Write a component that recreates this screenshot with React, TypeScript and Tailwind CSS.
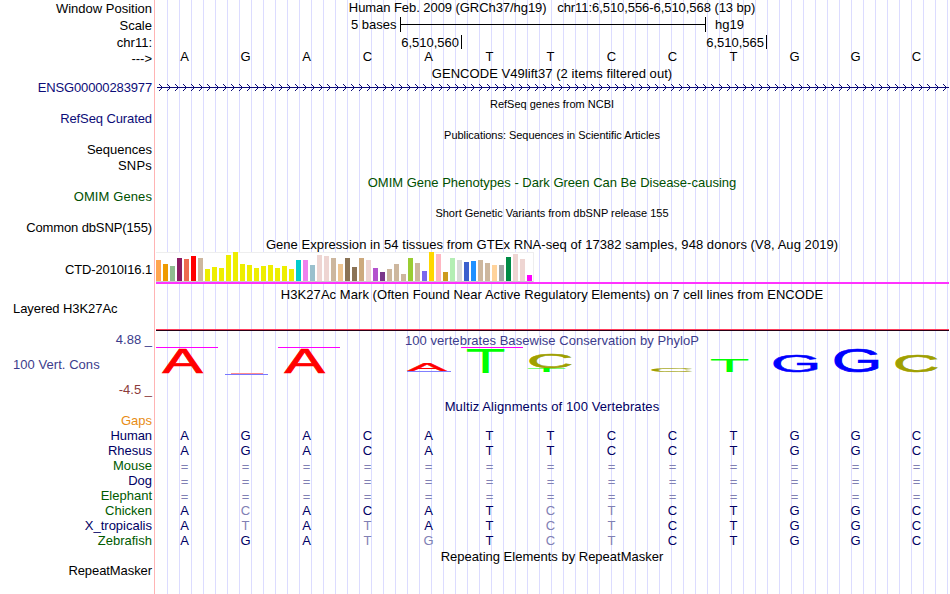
import clsx from "clsx";

type Label = { text: string; height: string; className?: string };

const labels: Label[] = [
  { text: "Window Position", height: "h-[17px]" },
  { text: "Scale", height: "h-[17px]" },
  { text: "chr11:", height: "h-[17px]" },
  { text: "--->", height: "h-[16px]" },
  { text: "ENSG00000283977", height: "h-[29px]", className: "tracking-[-0.14px] text-[#0c0c78]" },
  { text: "RefSeq Curated", height: "h-[31px]", className: "tracking-[-0.1px] text-[#0c0c78]" },
  { text: "Sequences", height: "h-[31px]" },
  { text: "SNPs", height: "h-[16px]", className: "tracking-[0.2px]" },
  { text: "OMIM Genes", height: "h-[31px]", className: "tracking-[0.1px] text-[#005000]" },
  { text: "Common dbSNP(155)", height: "h-[31px]", className: "tracking-[-0.12px]" },
  { text: "CTD-2010I16.1", height: "h-[42px]", className: "tracking-[-0.15px]" },
  { text: "Layered H3K27Ac", height: "h-[39px]", className: "mr-auto pl-[13px] tracking-[-0.07px]" },
  { text: "4.88 _", height: "h-[31px]", className: "text-[#3c3c8c]" },
  { text: "100 Vert. Cons", height: "h-[25px]", className: "mr-auto pl-[13px] tracking-[0.05px] text-[#3c3c8c]" },
  { text: "-4.5 _", height: "h-[25px]", className: "text-[#8c3c3c]" },
  { text: "Gaps", height: "h-[31px]", className: "text-[#e88c14]" },
  { text: "Human", height: "h-[15px]", className: "tracking-[-0.1px] text-[#000064]" },
  { text: "Rhesus", height: "h-[15px]", className: "text-[#000064]" },
  { text: "Mouse", height: "h-[15px]", className: "text-[#005a00]" },
  { text: "Dog", height: "h-[15px]", className: "text-[#000064]" },
  { text: "Elephant", height: "h-[15px]", className: "text-[#005a00]" },
  { text: "Chicken", height: "h-[15px]", className: "text-[#005a00]" },
  { text: "X_tropicalis", height: "h-[15px]", className: "text-[#000064]" },
  { text: "Zebrafish", height: "h-[15px]", className: "text-[#005a00]" },
  { text: "RepeatMasker", height: "h-[30px]", className: "tracking-[-0.08px]" },
];

// [height, colour] per tissue
const tissues: [number, string][] = [
  [21, "#ffa54f"], [17, "#ee9a00"], [15, "#8fbc8f"], [23, "#8b1c62"], [22, "#ee6a50"], [25, "#ff0000"],
  [23, "#cdb79e"], [12, "#eeee00"], [14, "#eeee00"], [13, "#eeee00"], [26, "#eeee00"], [29, "#eeee00"],
  [17, "#eeee00"], [16, "#eeee00"], [13, "#eeee00"], [15, "#eeee00"], [16, "#eeee00"], [13, "#eeee00"],
  [15, "#eeee00"], [12, "#eeee00"], [21, "#00cdcd"], [21, "#ee82ee"], [16, "#9ac0cd"], [26, "#eed5d2"],
  [25, "#eed5d2"], [23, "#cdb79e"], [17, "#eec591"], [23, "#8b7355"], [14, "#8b7355"], [23, "#cdaa7d"],
  [21, "#eed5d2"], [13, "#b452cd"], [9, "#7a378b"], [12, "#cdb79e"], [17, "#cdb79e"], [7, "#cdb79e"],
  [23, "#9acd32"], [18, "#cdb79e"], [10, "#7a67ee"], [29, "#ffd700"], [27, "#ffb6c1"], [9, "#cd9b1d"],
  [23, "#b4eeb4"], [21, "#d9d9d9"], [19, "#3a5fcd"], [20, "#1e90ff"], [21, "#cdb79e"], [18, "#cdb79e"],
  [16, "#ffd39b"], [16, "#a6a6a6"], [24, "#008b45"], [27, "#eed5d2"], [22, "#eed5d2"], [6, "#ff00ff"],
];

const reference = "AGACATTCCTGGC";

const alignments = [
  reference,
  reference,
  "=============",
  "=============",
  "=============",
  "ACACATCTCTGGC",
  "ATATATCTCTGGC",
  "AGATGTCTCTGGC",
];

// glyph extents in em, used to stretch a letter to a given box
const extents: Record<string, [number, number, number, number]> = {
  A: [0.002, 0.665, 0, 0.688],
  T: [0.021, 0.59, 0, 0.688],
  G: [0.05, 0.709, -0.01, 0.698],
  C: [0.05, 0.684, -0.01, 0.698],
};

type LogoProps = { char: string; x: number; y: number; w: number; h: number; fill: string };

const LogoLetter = ({ char, x, y, w, h, fill }: LogoProps) => {
  const [x0, x1, y0, y1] = extents[char];
  const sx = w / ((x1 - x0) * 50);
  const sy = h / ((y1 - y0) * 50);
  return (
    <text
      fontSize={50}
      fill={fill}
      stroke={fill}
      strokeWidth={char === "T" ? 0 : 1}
      transform={`translate(${x - x0 * 50 * sx} ${y + h + y0 * 50 * sy}) scale(${sx} ${sy})`}
    >
      {char}
    </text>
  );
};

const logo: LogoProps[] = [
  { char: "A", x: 7.5, y: 2, w: 40, h: 24, fill: "#ff0000" },
  { char: "A", x: 129.5, y: 2, w: 40, h: 24, fill: "#ff0000" },
  { char: "A", x: 252.5, y: 16, w: 39, h: 8, fill: "#ff0000" },
  { char: "T", x: 312, y: 2, w: 37.5, h: 24, fill: "#00ff00" },
  { char: "T", x: 373, y: 21, w: 37.5, h: 4, fill: "#00ff00" },
  { char: "C", x: 375, y: 7, w: 41, h: 14, fill: "#a0a000" },
  { char: "C", x: 497, y: 21, w: 40, h: 4, fill: "#a0a000" },
  { char: "T", x: 556, y: 13, w: 37.5, h: 12, fill: "#00ff00" },
  { char: "G", x: 619, y: 8, w: 43, h: 17, fill: "#0000ff" },
  { char: "G", x: 680, y: 2, w: 43, h: 23, fill: "#0000ff" },
  { char: "C", x: 741, y: 8, w: 41, h: 17, fill: "#a0a000" },
];

const Title = ({ children, className }: { children: string; className?: string }) => (
  <div className={clsx("flex items-end justify-center whitespace-pre", className)}>{children}</div>
);

const Bases = ({ seq, className }: { seq: string; className?: string }) => (
  <div className={clsx("-ml-px grid w-[793px] grid-cols-13 items-end text-center", className)}>
    {seq.split("").map((base, i) => (
      <span
        key={i}
        className={clsx(
          base === "=" && "translate-y-px",
          base !== reference[i] && "text-[#8080b4]",
        )}
      >
        {base}
      </span>
    ))}
  </div>
);

const GeneTrack = () => (
  <svg width="794" height="7" className="mt-[2px] block" shapeRendering="crispEdges">
    <path d="M2 3.5H794" stroke="#0c0c78" />
    {Array.from({ length: 99 }, (_, i) => (
      <path
        key={i}
        d={`M${4 + i * 8} 0h1v1h1v1h1v1h1v1h-1v1h-1v1h-1v1h-1v-1h1v-1h1v-1h1v-1h-1v-1h-1v-1h-1z`}
        fill="#0c0c78"
      />
    ))}
  </svg>
);

const Expression = () => (
  <div className="mt-[-1px] ml-px h-[32px] border-b-2 border-[#ff33ff]">
    <div className="flex h-[30px] w-[378px] items-end gap-[2px] border-t border-r border-b border-[#eeeeee] border-b-[#cccccc] bg-white">
      {tissues.map(([height, color], i) => (
        <div key={i} className="w-[5px] shrink-0" style={{ height, backgroundColor: color }} />
      ))}
    </div>
  </div>
);

const Conservation = () => (
  <svg width="794" height="30" className="block overflow-visible" fontFamily="Liberation Sans, sans-serif">
    <path d="M1 .5H63M123 .5H185M306 .5H368" stroke="#ff00ff" />
    <path d="M76 26.5H108" stroke="#ff8c8c" />
    <path d="M70 27.5H113" stroke="#7878ff" />
    <path d="M252 24.5H296" stroke="#8080ff" />
    {logo.map((letter, i) => (
      <LogoLetter key={i} {...letter} />
    ))}
  </svg>
);

const App = () => {
  return (
    <div className="flex h-[594px] w-[950px] overflow-hidden bg-white font-['Liberation_Sans',sans-serif] text-[13px] leading-4 text-black">
      <div className="flex w-[154px] flex-col items-end">
        {labels.map(({ text, height, className }) => (
          <div
            key={text}
            className={clsx("flex shrink-0 items-end pr-[2px] whitespace-pre", height, className)}
          >
            {text}
          </div>
        ))}
      </div>
      <div className="w-px bg-[#ffb4b4]" />
      <div className="w-[794px] bg-[repeating-linear-gradient(to_right,#dcdcff_0,#dcdcff_1px,transparent_1px,transparent_12px)] bg-[position:12px_0] bg-no-repeat">
        <Title className="h-[16px] tracking-[-0.06px]">
          {"Human Feb. 2009 (GRCh37/hg19)   chr11:6,510,556-6,510,568 (13 bp)"}
        </Title>
        <div className="mt-px flex h-[15px] items-center pl-[196px]">
          <span className="w-[49px]">5 bases</span>
          <div className="flex h-full w-[306px] items-center border-x border-black">
            <div className="h-px w-full bg-black" />
          </div>
          <span className="ml-[9px]">hg19</span>
        </div>
        <div className="mt-[3px] flex h-[14px] items-end leading-3">
          <div className="flex h-full w-[307px] items-end justify-end border-r border-black pr-[2px]">6,510,560</div>
          <div className="flex h-full w-[305px] items-end justify-end border-r border-black pr-[2px]">6,510,565</div>
        </div>
        <Bases seq={reference} className="h-[16px]" />
        <Title className="h-[17px] tracking-[0.05px]">GENCODE V49lift37 (2 items filtered out)</Title>
        <GeneTrack />
        <Title className="h-[21px] text-[11px]">RefSeq genes from NCBI</Title>
        <Title className="h-[31px] text-[11px] tracking-[-0.04px]">Publications: Sequences in Scientific Articles</Title>
        <Title className="h-[48px] text-[#005000]">OMIM Gene Phenotypes - Dark Green Can Be Disease-causing</Title>
        <Title className="h-[30px] text-[11px]">Short Genetic Variants from dbSNP release 155</Title>
        <Title className="h-[32px] tracking-[0.055px]">
          Gene Expression in 54 tissues from GTEx RNA-seq of 17382 samples, 948 donors (V8, Aug 2019)
        </Title>
        <Expression />
        <Title className="h-[19px] tracking-[0.055px]">
          H3K27Ac Mark (Often Found Near Active Regulatory Elements) on 7 cell lines from ENCODE
        </Title>
        <div className="mt-[26px] ml-px h-[2px] border-t border-[#ff3c5a] bg-[#280014]" />
        <Title className="h-[18px] tracking-[0.04px] text-[#3c3c8c]">100 vertebrates Basewise Conservation by PhyloP</Title>
        <div className="-mt-[2px]">
          <Conservation />
        </div>
        <Title className="h-[38px] tracking-[0.1px] text-[#000064]">Multiz Alignments of 100 Vertebrates</Title>
        <div className="mt-[13px]">
          {alignments.map((seq, i) => (
            <Bases key={i} seq={seq} className="h-[15px] text-[#000064]" />
          ))}
        </div>
        <Title className="h-[17px]">Repeating Elements by RepeatMasker</Title>
      </div>
    </div>
  );
};

export default App;
